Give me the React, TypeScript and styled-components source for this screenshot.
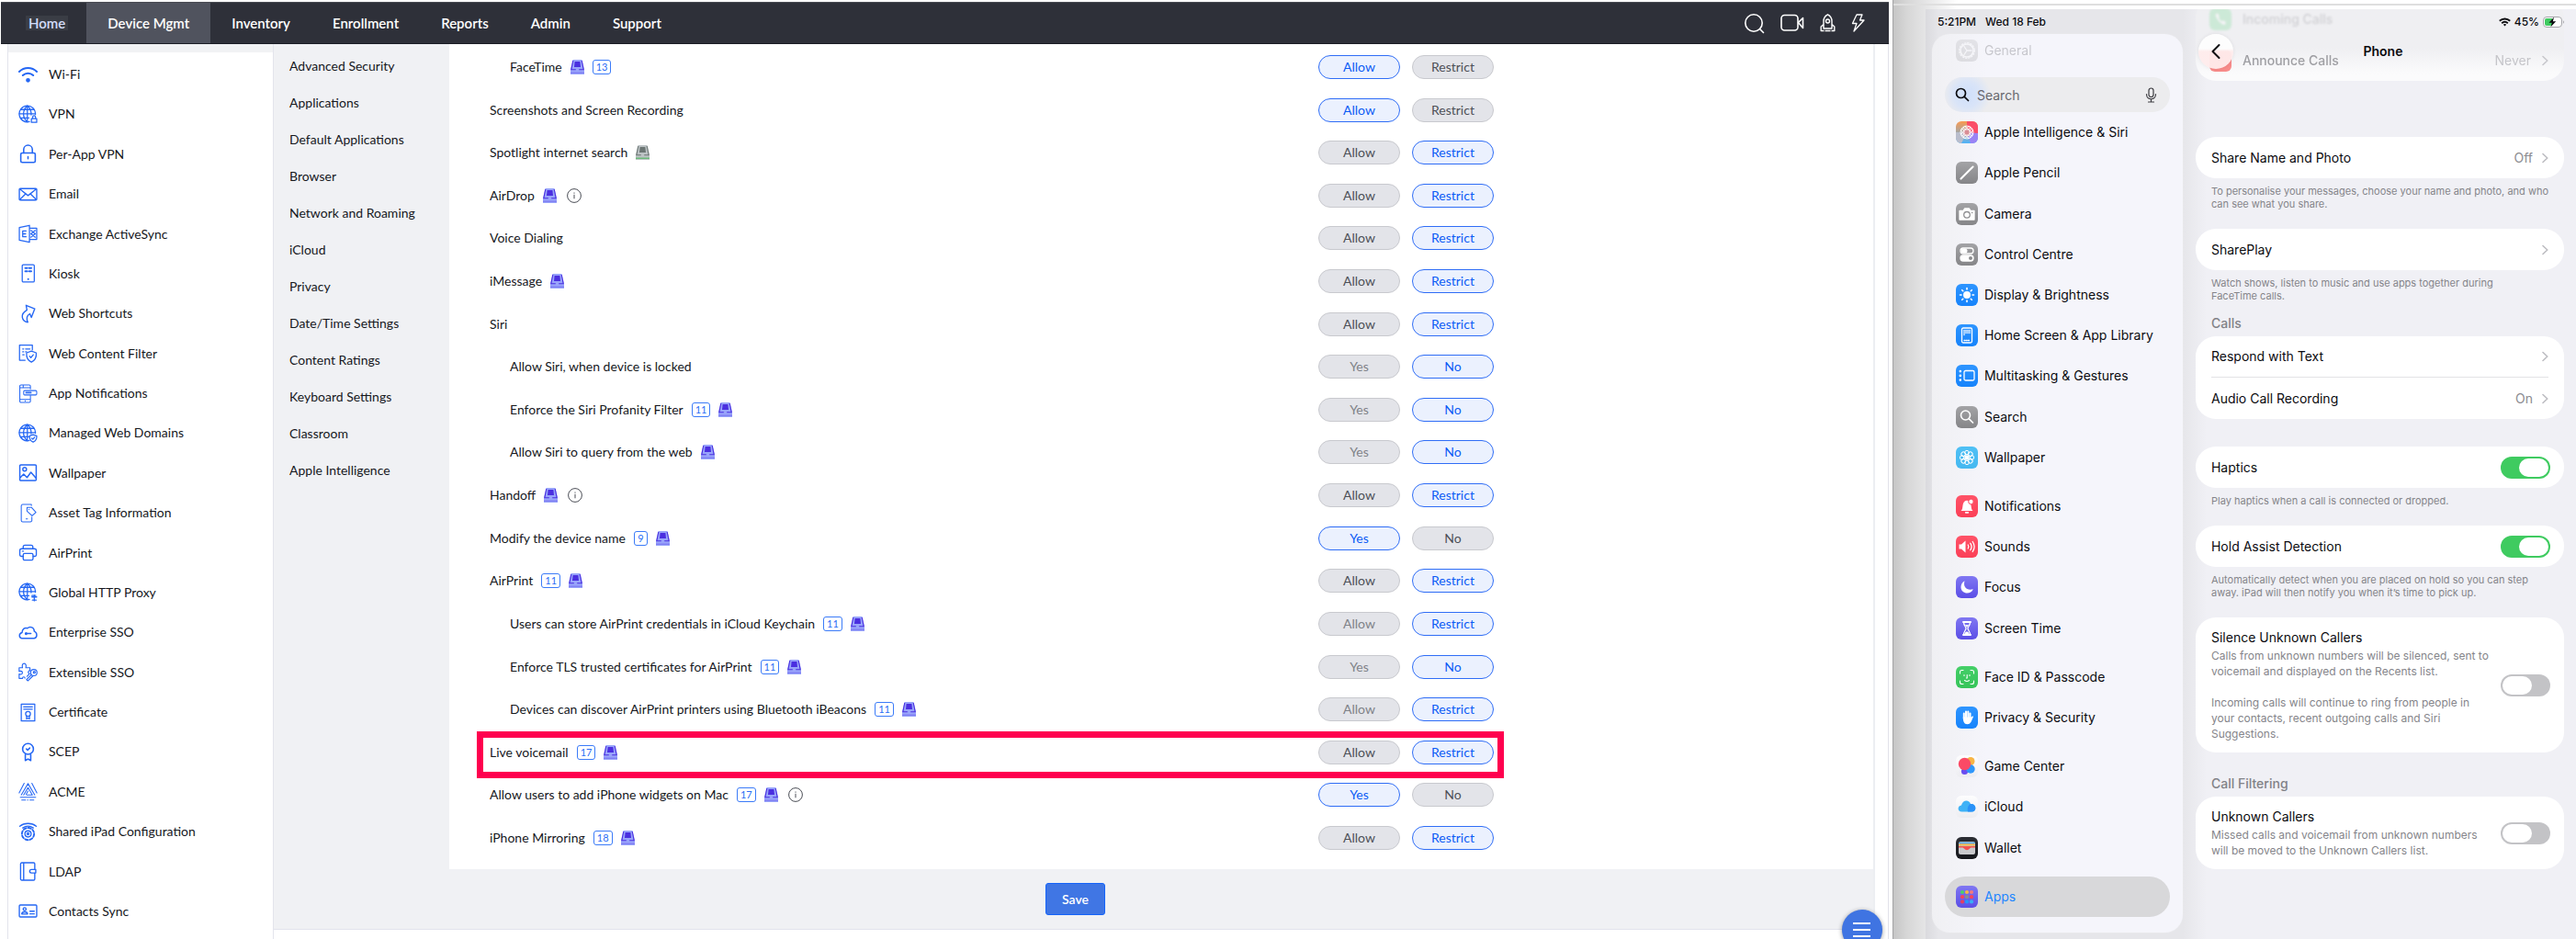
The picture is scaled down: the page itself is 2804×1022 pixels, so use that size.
import React from "react";
import styled, { createGlobalStyle } from "styled-components";

const GlobalStyle = createGlobalStyle`
  *, *::before, *::after { box-sizing: border-box; }
  body { margin: 0; background: #fff; }
  ul { list-style: none; margin: 0; padding: 0; }
  button, input { font-family: inherit; }
  h1, h2, p { margin: 0; font-weight: inherit; }
  a { color: inherit; text-decoration: none; }
`;

/* ---------- page ---------- */

const Page = styled.div`
  display: grid;
  grid-template-columns: 2060fr 744fr;
  min-height: 100vh;
`;

/* ---------- admin console ---------- */

const Console = styled.div`
  position: relative;
  display: flex;
  flex-direction: column;
  overflow: hidden;
  padding: 2px 4px 0 1px;
  background: #fff;
  color: #16181d;
  font: 14px/20px Lato, "Open Sans", sans-serif;
`;

const TopBar = styled.header`
  display: flex;
  justify-content: space-between;
  height: 46px;
  padding: 0 26px 0 7px;
  background: #2e3039;
  border-top: 1px solid #4a4c54;
  border-bottom: 1px solid #1a1c24;
  color: #fff;
`;

const TopNav = styled.nav`
  display: flex;
`;

const TopLink = styled.a<{ $active?: boolean; $focused?: boolean }>`
  display: flex;
  align-items: center;
  padding: 0 23px;
  font-size: 15px;
  font-weight: 600;
  background: ${(p) => (p.$active ? "#50535e" : "transparent")};
  span {
    background: ${(p) => (p.$focused ? "#3a3d45" : "transparent")};
    box-shadow: ${(p) => (p.$focused ? "0 0 0 3px #3a3d45" : "none")};
    color: ${(p) => (p.$focused ? "#d3ddfb" : "#fff")};
    line-height: 10px;
  }
`;

const TopTools = styled.div`
  display: flex;
  align-items: center;
  gap: 17px;
`;

const ToolButton = styled.button`
  display: flex;
  padding: 0;
  border: 0;
  background: none;
  color: #fff;
`;

const Body = styled.div`
  display: flex;
  flex: 1;
  padding: 0 14px 0 7px;
  border-right: 1px solid #e2e2ea;
`;

const SideNav = styled.nav`
  display: flex;
  flex-direction: column;
  width: 290px;
  border: 1px solid #e3e4ec;
  border-width: 0 1px;
  &::before {
    content: "";
    height: 9px;
    background: #f1f2f4;
  }
`;

const SideList = styled.ul`
  display: flex;
  flex: 1;
  flex-direction: column;
  justify-content: space-between;
  padding: 13px 11px 19px;
`;

const SideLink = styled.a`
  display: flex;
  align-items: center;
  gap: 12px;
  height: 22px;
  svg {
    width: 21px;
    height: 21px;
    flex: none;
  }
`;

const Workspace = styled.div`
  display: flex;
  flex: 1;
  flex-direction: column;
  border-right: 2px solid #eceef2;
`;

const Columns = styled.div`
  display: flex;
  flex: 1;
`;

const SubNav = styled.nav`
  width: 191px;
  padding: 4px 17px;
  background: #f0f1f4;
`;

const SubLink = styled.a`
  display: block;
  line-height: 40px;
  white-space: nowrap;
`;

const Settings = styled.ul`
  display: flex;
  flex: 1;
  flex-direction: column;
  justify-content: space-between;
  padding: 12px 413px 21px 44px;
`;

const Setting = styled.li<{ $nested?: boolean }>`
  position: relative;
  display: flex;
  align-items: center;
  justify-content: space-between;
  height: 26px;
  padding-left: ${(p) => (p.$nested ? 22 : 0)}px;
`;

const Highlight = styled.span`
  position: absolute;
  inset: -10px -11px -15px -14px;
  border: 7px solid #ff004f;
  pointer-events: none;
`;

const SettingLabel = styled.span`
  display: flex;
  align-items: center;
  gap: 9px;
  white-space: nowrap;
`;

const Version = styled.span`
  min-width: 15px;
  padding: 0 3px;
  border: 1px solid #3b7bf8;
  border-radius: 3px;
  color: #2b6ef5;
  font-size: 11px;
  line-height: 14px;
  text-align: center;
`;

const Choices = styled.span`
  display: flex;
  gap: 13px;
`;

const Choice = styled.button<{ $on: boolean; $dim?: boolean }>`
  width: 89px;
  height: 26px;
  padding: 0;
  border: 1px solid ${(p) => (p.$on ? "#2f6df6" : "#c8c9ce")};
  border-radius: 13px;
  background: ${(p) => (p.$on ? "#ebf1fe" : "#e3e4e9")};
  color: ${(p) => (p.$on ? "#0b5cf5" : p.$dim ? "#7f8288" : "#4d5057")};
  font-size: 14px;
  line-height: 20px;
`;

const Footer = styled.footer`
  display: flex;
  justify-content: center;
  height: 66px;
  padding: 15px 0 0 4px;
  background: #f0f1f4;
  border-bottom: 1px solid #e2e3ec;
`;

const Tail = styled.div`
  height: 10px;
`;

const SaveButton = styled.button`
  width: 65px;
  height: 35px;
  border: 1px solid #1464fa;
  border-radius: 3px;
  background: #4076e4;
  color: #fff;
  font-size: 14px;
  font-weight: 600;
`;

const Fab = styled.button`
  position: absolute;
  right: 11px;
  bottom: -12px;
  display: flex;
  flex-direction: column;
  align-items: center;
  justify-content: center;
  gap: 5px;
  width: 44px;
  height: 44px;
  padding: 0;
  border: 0;
  border-radius: 50%;
  background: #3f74e2;
  box-shadow: 0 1px 5px rgba(0, 0, 0, 0.4);
  i {
    width: 19px;
    height: 2px;
    background: #fff;
  }
`;

/* ---------- tablet ---------- */

const TabletFrame = styled.div`
  position: relative;
  display: flex;
  padding: 10px 0 0 35px;
  background: linear-gradient(90deg, #c6c6c6 0, #d6d6d6 14px, #e4e4e5 34px, #fff 70px);
  border-left: 1px solid #a3a3a5;
  &::before {
    content: "";
    position: absolute;
    inset: 4px 0 auto 0;
    height: 2px;
    background: #dfdfdf;
  }
`;

const Tablet = styled.div`
  position: relative;
  display: flex;
  flex: 1;
  overflow: hidden;
  padding-left: 7px;
  background: linear-gradient(90deg, #dadade 0, #e6e6ea 14px, #e6e6ea 280px, #f0f0f5 306px);
  color: #0b0b0f;
  font: 14px/20px Inter, Roboto, sans-serif;
`;

const Clock = styled.div`
  position: absolute;
  top: 4px;
  left: 13px;
  display: flex;
  gap: 10px;
  font-size: 12px;
  font-weight: 500;
`;

const Battery = styled.div`
  position: absolute;
  top: 4px;
  right: 12px;
  display: flex;
  align-items: center;
  gap: 4px;
  font-size: 12px;
  font-weight: 500;
`;

const Panel = styled.aside`
  display: flex;
  flex-direction: column;
  width: 273px;
  margin: 27px 8px 7px 0;
  padding: 6px 14px 17px;
  border-radius: 20px;
  background: linear-gradient(90deg, #f0f0f3, #f5f5fb 60px);
  box-shadow: 0 0 1px rgba(255, 255, 255, 0.9);
`;

const PanelRow = styled.a<{ $selected?: boolean; $faded?: boolean }>`
  display: flex;
  flex: ${(p) => (p.$faded ? "none" : 1)};
  align-items: center;
  gap: 7px;
  padding: 0 12px;
  border-radius: 22px;
  background: ${(p) => (p.$selected ? "#d8d8da" : "transparent")};
  color: ${(p) => (p.$selected ? "#1e86ff" : "inherit")};
  opacity: ${(p) => (p.$faded ? 0.2 : 1)};
  white-space: nowrap;
  svg {
    width: 24px;
    height: 24px;
    flex: none;
  }
`;

const SearchBox = styled.label`
  display: flex;
  align-items: center;
  gap: 8px;
  height: 38px;
  margin-top: 17px;
  padding: 0 14px 0 11px;
  border-radius: 19px;
  background: radial-gradient(circle at 24px 19px, #cfdffb 0, #d9e4f8 14px, rgba(217, 228, 248, 0) 26px), #ececee;
  input {
    flex: 1;
    min-width: 0;
    padding: 0;
    border: 0;
    background: none;
    outline: 0;
    font-size: 14px;
    color: #0b0b0f;
  }
  input::placeholder {
    color: #67676d;
    opacity: 1;
  }
  svg {
    flex: none;
  }
`;

const PanelGroups = styled.div`
  display: flex;
  flex: 1;
  flex-direction: column;
  gap: 9px;
`;

const PanelGroup = styled.div<{ $rows: number }>`
  display: flex;
  flex: ${(p) => p.$rows} 0 0px;
  flex-direction: column;
`;

const Detail = styled.section`
  position: relative;
  flex: 1;
  padding: 0 13px 0 6px;
`;

const DetailHeader = styled.header`
  position: absolute;
  inset: 27px 0 auto 0;
  height: 38px;
  h1 {
    font-size: 14px;
    font-weight: 600;
    line-height: 38px;
    text-align: center;
  }
`;

const BackButton = styled.button`
  position: absolute;
  left: 9px;
  display: flex;
  align-items: center;
  justify-content: center;
  width: 38px;
  height: 38px;
  padding: 0;
  border: 0;
  border-radius: 50%;
  background: linear-gradient(#fdfdfd 42%, rgba(255, 236, 236, 0.95) 50%);
  box-shadow: 0 0 4px rgba(0, 0, 0, 0.08);
  color: #0b0b0f;
`;

const Scrolled = styled.div`
  height: 90px;
  margin: -12px 0 61px;
  border-radius: 22px;
  background: linear-gradient(#efeff2 60%, #fbfbfc 92%);
`;

const ScrolledRow = styled.div<{ $blur: number; $strength: number }>`
  display: flex;
  align-items: center;
  gap: 12px;
  height: 45px;
  padding: 0 17px 0 15px;
  color: #8a8a8f;
  filter: blur(${(p) => p.$blur}px);
  opacity: ${(p) => p.$strength};
  span {
    flex: 1;
    font-weight: 500;
  }
`;

const Faint = styled.em`
  color: #b9b9be;
  font-style: normal;
`;

const Card = styled.div`
  padding: 0 17px;
  border-radius: 22px;
  background: #fff;
  p + & {
    margin-top: 7px;
  }
`;

const CardRow = styled.div<{ $line?: boolean }>`
  display: flex;
  align-items: center;
  gap: 10px;
  height: 45px;
  border-bottom: ${(p) => (p.$line ? "1px solid #e2e2e5" : "0")};
  span,
  label {
    flex: 1;
  }
  em {
    color: #8b8b90;
    font-style: normal;
  }
`;

const Note = styled.p`
  padding: 7px 17px 13px;
  color: #85858a;
  font-size: 11px;
  line-height: 14px;
  white-space: pre;
`;

const GroupTitle = styled.h2`
  margin: 0 17px 4px;
  color: #828287;
  font-size: 14px;
  font-weight: 500;
  div + & {
    margin-top: 24px;
  }
`;

const LongRow = styled.div`
  display: flex;
  align-items: center;
  justify-content: space-between;
  padding: 12px 0;
  label {
    display: block;
  }
  p {
    margin-top: 1px;
    color: #85858a;
    font-size: 12px;
    line-height: 17px;
    white-space: pre-line;
  }
`;

const Toggle = styled.input`
  appearance: none;
  flex: none;
  width: 54px;
  height: 24px;
  margin: 0 -2px 0 0;
  padding: 2px;
  border-radius: 12px;
  background: #c3c3c6;
  &::before {
    content: "";
    display: block;
    width: 32px;
    height: 20px;
    border-radius: 10px;
    background: #fff;
  }
  &:checked {
    background: #3fcb60;
  }
  &:checked::before {
    margin-left: auto;
  }
`;

const Spacer = styled.div`
  height: 30px;
`;

/* ---------- drawings ---------- */

const Line = ({ children, w = 1.2 }: { children: React.ReactNode; w?: number }) => (
  <svg viewBox="0 0 20 20" fill="none" stroke="#2567f4" strokeWidth={w} strokeLinecap="round" strokeLinejoin="round" aria-hidden>
    {children}
  </svg>
);

const Globe = () => (
  <>
    <path d="M11.5 17.6A8.4 8.4 0 1 1 17.7 10" />
    <path d="M9.3 1C4 6 4 13 9.3 17.8M9.3 1c3.4 3 4.2 6 4 9.5M9.3 1v16.8M1 9.4h16.5M2.5 5h13.7M2.5 13.6H11" />
  </>
);

const sideIcons: Record<string, React.ReactNode> = {
  "Wi-Fi": (
    <Line w={1.9}>
      <path d="M.9 6.6C6 1.6 14 1.6 19.1 6.6M4.6 10.5c3-2.9 7.8-2.9 10.8 0" />
      <circle cx="10" cy="15.5" r="1.3" fill="#2567f4" />
    </Line>
  ),
  VPN: (
    <Line>
      <Globe />
      <path d="M13.5 14.3h5.5v4h-5.5zM14.8 14.3v-1.5a1.5 1.5 0 0 1 3 0v1.5" />
    </Line>
  ),
  "Per-App VPN": (
    <Line w={1.5}>
      <rect x="2.5" y="9" width="15" height="9.8" rx="1.5" />
      <path d="M5.5 9V5.5a4.5 4.5 0 0 1 9 0V9M10 13v2" />
    </Line>
  ),
  Email: (
    <Line w={1.3}>
      <rect x="1" y="4" width="18" height="12" rx="1" />
      <path d="M1.5 4.5 10 11.300l8.500-6.800M1.500 15.500l6-6M18.500 15.500l-6-6" />
    </Line>
  ),
  "Exchange ActiveSync": (
    <Line>
      <path d="M11.5 1.2v17.6L1 16.500v-13zM4.500 7h3.500M4.500 10h3M4.500 13h3.500M4.500 7v6M11.500 4.200H19v11.600h-7.500M13 6.500l4.500 3.500-4.500 3.500M17.500 6.500 13 10l4.500 3.500" />
    </Line>
  ),
  Kiosk: (
    <Line>
      <rect x="4" y="1" width="12.5" height="18" rx="1.2" />
      <path d="M7.2 4.500h2M11.300 4.500h2M7.200 7.800h2M11.300 7.800h2" strokeWidth="2" />
      <path d="M10.2 15.800v.3" strokeWidth="1.8" />
    </Line>
  ),
  "Web Shortcuts": (
    <Line w={1.3}>
      <path d="M8 1.200 17 4.800l-3.500 9-1.600-3.800C9 11.500 8 14.500 9.800 18.800 3.500 17.500 1.200 10.500 8.900 6z" />
    </Line>
  ),
  "Web Content Filter": (
    <Line>
      <path d="M7 17.200H1.200V1.500h13.300v5M4.500 5.500h1M7.500 5.500h4.500M4.500 8.500h1M7.500 8.500h1M4.500 11.500h1.500" />
      <path d="M13.500 7.800 18.500 9.500c.4 4.500-1.500 8-5 9.600-3.500-1.600-5.400-5.100-5-9.600zM11.500 13l1.500 1.500 2.500-3" />
    </Line>
  ),
  "App Notifications": (
    <Line w={1}>
      <path d="M12.500 5V2.200A1.200 1.200 0 0 0 11.300 1H2.700a1.200 1.200 0 0 0-1.200 1.200v15.600A1.200 1.200 0 0 0 2.700 19h8.600a1.200 1.200 0 0 0 1.200-1.200V12M1.500 3.800h11M1.500 16h11M5 1v2.500M7 17.500h.2" />
      <rect x="5.5" y="6.8" width="13.5" height="4.5" rx="1" />
      <path d="M8 9h5" strokeWidth="1.6" />
    </Line>
  ),
  "Managed Web Domains": (
    <Line>
      <Globe />
      <path d="M15.300 11.500 19 12.700c.2 3-1 5.200-3.700 6.500-2.700-1.300-3.900-3.500-3.700-6.500zM13.900 15.200l1.100 1.100 1.800-2" />
    </Line>
  ),
  Wallpaper: (
    <Line w={1.4}>
      <rect x="1.5" y="1.8" width="17" height="16.4" rx="1" />
      <circle cx="6.5" cy="6.5" r="1.9" />
      <path d="m2 15 3.500-3.500 3.500 3.500 4-5.500 5.200 6" />
    </Line>
  ),
  "Asset Tag Information": (
    <Line w={1}>
      <path d="M13.500 2V1H4.500A1.500 1.500 0 0 0 3 2.500v15A1.500 1.500 0 0 0 4.500 19h8a1.500 1.500 0 0 0 1.500-1.500V14M8 16h1.500" />
      <path d="M9 4h4.500l4.700 5.200-4 3.600L9 8zM11 6v.3" />
    </Line>
  ),
  AirPrint: (
    <Line w={1.3}>
      <path d="M5 6V4.200C5 3 5.500 2.300 6.800 2.300h6.400c1.300 0 1.800.7 1.800 1.900V6" />
      <path d="M5 13.800H3.200A1.700 1.700 0 0 1 1.500 12V7.800C1.500 6.600 2.300 6 3.400 6h13.200c1.100 0 2 .6 2 1.800V12a1.700 1.700 0 0 1-1.700 1.800H15.500M4.200 8.500h1" />
      <rect x="5" y="10.8" width="10.2" height="7" rx="1.5" />
    </Line>
  ),
  "Global HTTP Proxy": (
    <Line>
      <Globe />
      <path d="M14 13.500h4M14 15h5M16.500 13v6M14.500 18.300h4" />
    </Line>
  ),
  "Enterprise SSO": (
    <Line w={1.4}>
      <path d="M3.500 16c-3-.5-3.300-5 .3-6 .3-4 3-5.500 5.500-4.500 3-2.600 7.200-.8 7.200 3.200 3.200 1 3.500 6.500 0 7.300z" />
      <circle cx="8" cy="11" r=".8" />
      <path d="M9 11h4" />
    </Line>
  ),
  "Extensible SSO": (
    <Line w={1.1}>
      <path d="M.8 5.500h3.500C3.500 2.500 4.500 1 6 1s2.500 1.500 1.700 4.500H12v3c-2 0-2.500 2.500-.5 3.300L9 14.500M.8 5.500v3.700C3 8.500 4.200 9.300 4.200 10.600c0 1.500-1.500 2.200-3.400 1.400v4.500h3.500c0-2 2.500-2 2.500-.2" />
      <circle cx="16" cy="10.5" r="3.3" />
      <circle cx="16.5" cy="10.2" r="1" />
      <path d="m13.500 12.800-5 5 1.500 1.200 5.200-5.200" />
    </Line>
  ),
  Certificate: (
    <Line w={1.2}>
      <path d="M3 1.200h14v17.600H3zM5.500 4.200h9M5.500 6.500h9" />
      <circle cx="10" cy="11.5" r="2.5" />
      <path d="M8.500 13.500v3.200l1.500-.8 1.500.8v-3.200" />
    </Line>
  ),
  SCEP: (
    <Line w={1.5}>
      <circle cx="10" cy="6.8" r="5.6" />
      <path d="m8.300 6.800 1.300 1.200 2.200-2.200M7.200 12.500v6.300L10 17.200l2.800 1.600v-6.300" />
    </Line>
  ),
  ACME: (
    <Line w={1}>
      <path d="M10 1.800 3 13.500M10 1.800l7 11.700M2 16h16M10 6l-4.500 7.500M10 6l4.500 7.500H9M10 9.500 8 13M6 1.500l-5.200 10M14 1.500l5.200 10M3.500 18.800h4M9.500 18.800h.5M12 18.800h4" />
    </Line>
  ),
  "Shared iPad Configuration": (
    <Line w={1.3}>
      <path d="M1.500 4C6 .3 14 .3 18.500 4M4.500 5.800c3.300-2.300 7.700-2.300 11 0" />
      <circle cx="10" cy="12" r="1" />
      <circle cx="10" cy="12" r="3.2" />
      <circle cx="10" cy="12" r="6.3" strokeDasharray="3 1.95" strokeWidth="1.8" />
    </Line>
  ),
  LDAP: (
    <Line w={1.3}>
      <path d="M17 7.500V2.200A1.200 1.200 0 0 0 15.800 1H3.500a1.200 1.200 0 0 0-1.200 1.200v15.600A1.200 1.200 0 0 0 3.500 19h12.300a1.200 1.200 0 0 0 1.200-1.200V12M5.500 1v18M18 8h-4.500a1.700 1.700 0 0 0 0 3.500H18z" />
    </Line>
  ),
  "Contacts Sync": (
    <Line w={1.3}>
      <rect x="1" y="3.8" width="18" height="12.4" rx="1" />
      <circle cx="6.5" cy="8" r="1.5" />
      <path d="M3.500 13.200c0-3 6-3 6 0zM12 10.200h4.500M12 13h4.500" />
    </Line>
  ),
};

const DeviceIcon = ({ muted }: { muted?: boolean }) => {
  const dark = muted ? "#6c7674" : "#4a2fe0";
  return (
    <svg width="15" height="16" viewBox="0 0 15 16" aria-hidden>
      <path d="M2.500 0h10L15 10.500V16H0v-5.500z" fill={muted ? "#bcc2c4" : "#98a4fa"} />
      <path d="M2.800 1 .8 10.800h5M12.200 1l2 9.800h-5" fill="none" stroke={dark} strokeWidth="1.1" />
      <path d="M4.600 2h5.800l.6 6h-7z" fill={dark} />
      <path d="M0 14.200h15" stroke={muted ? "#58b868" : "#7c78f2"} strokeWidth="1.2" />
    </svg>
  );
};

const InfoIcon = () => (
  <svg width="18" height="16" viewBox="0 0 18 16" fill="none" stroke="#4a4d55" strokeWidth="1" aria-hidden>
    <circle cx="10" cy="8" r="7.4" />
    <path d="M10 6.800v4.500M10 4.500v1.200" />
  </svg>
);

const Chevron = () => (
  <svg width="7" height="12" viewBox="0 0 7 12" fill="none" stroke="#bdbdc2" strokeWidth="1.6" strokeLinecap="round" strokeLinejoin="round" aria-hidden>
    <path d="m1 1.500 4.800 4.500L1 10.500" />
  </svg>
);

const Tile = ({ top, bottom, children }: { top: string; bottom?: string; children?: React.ReactNode }) => {
  const id = React.useId();
  return (
    <svg viewBox="0 0 24 24" fill="none" stroke="#fff" strokeWidth="1.3" strokeLinecap="round" strokeLinejoin="round" aria-hidden>
      <linearGradient id={id} x1="0" y1="0" x2="0" y2="1">
        <stop offset="0" stopColor={top} />
        <stop offset="1" stopColor={bottom ?? top} />
      </linearGradient>
      <rect width="24" height="24" rx="6" fill={`url(#${id})`} stroke="none" />
      {children}
    </svg>
  );
};

const turns = [0, 45, 90, 135, 180, 225, 270, 315];
const grey = { top: "#a3a3a6", bottom: "#858588" };
const blue = { top: "#2e95ff", bottom: "#1683fb" };
const red = { top: "#ff5368", bottom: "#fb3f57" };
const indigo = { top: "#8077f2", bottom: "#5b4ee6" };

const tiles: Record<string, React.ReactNode> = {
  General: (
    <Tile {...grey}>
      <circle cx="12" cy="12" r="7" strokeWidth="1.6" />
      <circle cx="12" cy="12" r="8.3" strokeDasharray="1.3 2" strokeWidth="1.3" />
      <path d="M9 7.500 12 12h5M12 12l-3 4.500" />
    </Tile>
  ),
  "Apple Intelligence & Siri": (
    <Tile top="#fb9a50" bottom="#4fb4fb">
      <path d="M12 0h6a6 6 0 0 1 6 6v8L12 12z" fill="#fb4d68" stroke="none" />
      <path d="M0 12v6a6 6 0 0 0 6 6l6-12z" fill="#b9bdcc" stroke="none" />
      <path d="m24 13-12-1 4 12h2a6 6 0 0 0 6-6z" fill="#9a83f5" stroke="none" />
      <circle cx="12" cy="12" r="4.5" fill="#d98d95" stroke="none" />
      {turns.map((a) => (
        <ellipse key={a} cx="12" cy="7" rx="3.6" ry="2" transform={`rotate(${a} 12 12)`} strokeWidth=".9" />
      ))}
    </Tile>
  ),
  "Apple Pencil": (
    <Tile {...grey}>
      <path d="M5.500 18.500 17.500 6.500" strokeWidth="2.2" />
      <path d="M18.500 5.500h.1" strokeWidth="2" />
    </Tile>
  ),
  Camera: (
    <Tile {...grey}>
      <path d="M4 8.500h4L9.500 6h5L16 8.500h4v9.500H4z" fill="#fff" />
      <circle cx="12" cy="12.8" r="3.3" stroke="#909093" />
      <path d="M17.500 10.500h.3" stroke="#909093" />
    </Tile>
  ),
  "Control Centre": (
    <Tile {...grey}>
      <rect x="5" y="5" width="14" height="6" rx="3" />
      <rect x="5.5" y="5.5" width="7" height="5" rx="2.5" fill="#fff" stroke="none" />
      <rect x="5" y="13" width="14" height="6" rx="3" fill="#fff" />
      <circle cx="16" cy="16" r="2" fill="#8c8c8f" stroke="none" />
    </Tile>
  ),
  "Display & Brightness": (
    <Tile {...blue}>
      <circle cx="12" cy="12" r="4" fill="#fff" stroke="none" />
      {turns.map((a) => (
        <path key={a} d="M12 4.500v1.500" strokeWidth="1.6" transform={`rotate(${a} 12 12)`} />
      ))}
    </Tile>
  ),
  "Home Screen & App Library": (
    <Tile {...blue}>
      <rect x="6.5" y="4" width="11" height="16" rx="1.5" />
      <path d="M9 6.500v5M11 6.500v3M13 6.500v3M15 6.500v3M9 17.500h6" strokeDasharray="1 1.2" />
    </Tile>
  ),
  "Multitasking & Gestures": (
    <Tile {...blue}>
      <rect x="9" y="6.5" width="11" height="10.5" rx="1.5" />
      <path d="M4.800 7v.1M4.800 11.800v.1M4.800 16.500v.1" strokeWidth="2.6" />
    </Tile>
  ),
  Search: (
    <Tile {...grey}>
      <circle cx="10.5" cy="10" r="5" strokeWidth="1.6" />
      <path d="m14.300 13.800 4.200 4.200" strokeWidth="1.7" />
    </Tile>
  ),
  Wallpaper: (
    <Tile top="#4fc0f5" bottom="#45b8f0">
      {turns.map((a) => (
        <circle key={a} cx="12" cy="6.6" r="2.3" transform={`rotate(${a} 12 12)`} strokeWidth="1" />
      ))}
      {turns.map((a) => (
        <path key={a} d="M12 10V8.500" transform={`rotate(${a} 12 12)`} strokeWidth="1" />
      ))}
      <circle cx="12" cy="12" r="1.6" fill="#fff" />
    </Tile>
  ),
  Notifications: (
    <Tile {...red}>
      <path d="M5.500 17c2-1.500 1.500-4 2.200-7C8.500 7 10 5.800 12 5.800s3.500 1.200 4.300 4.200c.7 3 .2 5.500 2.200 7z" fill="#fff" stroke="none" />
      <path d="M10.800 18.800h2.400" strokeWidth="1.8" />
      <circle cx="16.5" cy="7" r="2.8" fill="#fff" stroke="#fd4a60" strokeWidth="1" />
    </Tile>
  ),
  Sounds: (
    <Tile {...red}>
      <path d="M3.500 9.500H6l4.500-4v13L6 14.500H3.500z" fill="#fff" stroke="none" />
      <path d="M13.200 10c.8 1.200.8 2.800 0 4M15.800 8.300c1.600 2.300 1.600 5.100 0 7.400M18.200 6.500c2.400 3.500 2.400 7.500 0 11" />
    </Tile>
  ),
  Focus: (
    <Tile {...indigo}>
      <path d="M9.500 5.200C7.500 12 12 16 18.800 14.200 16 21 5.500 19.500 5.500 12c0-3 1.500-5.600 4-6.800z" fill="#fff" stroke="none" />
    </Tile>
  ),
  "Screen Time": (
    <Tile {...indigo}>
      <path d="M8 5h8M8 19h8" strokeWidth="2" />
      <path d="M8.500 5c0 4 2.500 5 2.500 7s-2.500 3-2.500 7h7c0-4-2.500-5-2.500-7s2.500-3 2.500-7z" />
      <path d="M9.500 18c.5-2 1.500-2.500 2.500-2.500s2 .5 2.500 2.500zM10 8h4l-2 3z" fill="#fff" stroke="none" />
    </Tile>
  ),
  "Face ID & Passcode": (
    <Tile top="#45cf68" bottom="#37c45a">
      <path
        d="M4.500 8V6.500a2 2 0 0 1 2-2H8M16 4.500h1.500a2 2 0 0 1 2 2V8M4.500 16v1.500a2 2 0 0 0 2 2H8M16 19.500h1.500a2 2 0 0 0 2-2V16M9 9.500v1M15 9.500v1M12.200 9.500v3.500h-.8M9.500 15.500c1.500 1.200 3.500 1.200 5 0"
        strokeWidth="1.1"
      />
    </Tile>
  ),
  "Privacy & Security": (
    <Tile {...blue}>
      <path d="M8.800 13V7.500M11 11.500V5.500M13.300 11.500V5.500M15.500 12V7.500" strokeWidth="2" />
      <path d="M7.800 11.500h8.700l2-1.300c.8.500.3 1.600-.5 3-1 2.500-2 6-5.500 6-3.700 0-4.700-3-4.700-7.700z" fill="#fff" stroke="none" />
    </Tile>
  ),
  "Game Center": (
    <Tile top="#fdfdfe" bottom="#ededf1">
      <circle cx="16" cy="6.5" r="4.5" fill="#f8b545" stroke="none" />
      <circle cx="9.5" cy="17.5" r="3.6" fill="#6a4df0" stroke="none" />
      <circle cx="16" cy="15" r="4.7" fill="#2e97fb" stroke="none" />
      <circle cx="9.5" cy="9.5" r="6.7" fill="#fb4a66" stroke="none" />
    </Tile>
  ),
  iCloud: (
    <Tile top="#fdfdfe" bottom="#ededf1">
      <path d="M6.500 17.500c-5 0-5.200-6.500-.5-7C7 4.500 14.500 3.500 16 9c6.500-.5 7.500 8.500 1 8.500z" fill="#3fb2f6" stroke="none" />
      <path d="M13 17.500c-1-4 1-8.500 3-8.500 6.500-.5 7.500 8.500 1 8.500z" fill="#2a92f8" stroke="none" />
    </Tile>
  ),
  Wallet: (
    <Tile top="#2b2d33" bottom="#15161b">
      <rect x="3" y="5" width="18" height="14" rx="2" fill="#c9c9cc" stroke="none" />
      <path d="M4 6.500h16" stroke="#4aa3e8" strokeWidth="1.6" />
      <path d="M4 8.500h16" stroke="#f2b84a" strokeWidth="1.8" />
      <path d="M3 10h18v1.600h-4.500c-1 0-2 2.600-4.500 2.600s-3.500-2.600-4.500-2.600H3z" fill="#f4524f" stroke="none" />
    </Tile>
  ),
  Apps: (
    <Tile {...indigo}>
      {["#4bd06a", "#f8b545", "#f2787c", "#fb4358", "#8b8b92", "#fb4358", "#e33f62", "#2496fb", "#39aef5"].map((c, i) => (
        <circle key={i} cx={7 + (i % 3) * 5} cy={7 + Math.floor(i / 3) * 5.2} r="2.1" fill={c} stroke="none" />
      ))}
    </Tile>
  ),
};

const PhoneTile = () => (
  <svg width="24" height="24" viewBox="0 0 24 24" aria-hidden>
    <rect width="24" height="24" rx="6" fill="#7fdc9a" />
    <path d="M7 6c-2 3 6 13 10 12l1-3-3-2-1.500 1.200c-1.500-.7-3.200-3-3.500-4.200L11 9 9 5.500z" fill="#fff" />
  </svg>
);

const AlertTile = () => (
  <svg width="24" height="24" viewBox="0 0 24 24" aria-hidden>
    <rect width="24" height="24" rx="6" fill="#f8706f" />
  </svg>
);

/* ---------- data ---------- */

const topLinks = ["Home", "Device Mgmt", "Inventory", "Enrollment", "Reports", "Admin", "Support"];

const subLinks = [
  "Advanced Security",
  "Applications",
  "Default Applications",
  "Browser",
  "Network and Roaming",
  "iCloud",
  "Privacy",
  "Date/Time Settings",
  "Content Ratings",
  "Keyboard Settings",
  "Classroom",
  "Apple Intelligence",
];

type Mark = "device" | "muted" | "info" | number;
type Row = { label: string; marks?: Mark[]; nested?: boolean; yesNo?: boolean; on?: boolean; dim?: boolean; highlight?: boolean };

const rows: Row[] = [
  { label: "FaceTime", marks: ["device", 13], nested: true, on: true },
  { label: "Screenshots and Screen Recording", on: true },
  { label: "Spotlight internet search", marks: ["muted"] },
  { label: "AirDrop", marks: ["device", "info"] },
  { label: "Voice Dialing" },
  { label: "iMessage", marks: ["device"] },
  { label: "Siri" },
  { label: "Allow Siri, when device is locked", nested: true, yesNo: true, dim: true },
  { label: "Enforce the Siri Profanity Filter", marks: [11, "device"], nested: true, yesNo: true, dim: true },
  { label: "Allow Siri to query from the web", marks: ["device"], nested: true, yesNo: true, dim: true },
  { label: "Handoff", marks: ["device", "info"] },
  { label: "Modify the device name", marks: [9, "device"], yesNo: true, on: true },
  { label: "AirPrint", marks: [11, "device"] },
  { label: "Users can store AirPrint credentials in iCloud Keychain", marks: [11, "device"], nested: true, dim: true },
  { label: "Enforce TLS trusted certificates for AirPrint", marks: [11, "device"], nested: true, yesNo: true, dim: true },
  { label: "Devices can discover AirPrint printers using Bluetooth iBeacons", marks: [11, "device"], nested: true, dim: true },
  { label: "Live voicemail", marks: [17, "device"], highlight: true },
  { label: "Allow users to add iPhone widgets on Mac", marks: [17, "device", "info"], yesNo: true, on: true },
  { label: "iPhone Mirroring", marks: [18, "device"] },
];

const panelGroups = [
  [
    "Apple Intelligence & Siri",
    "Apple Pencil",
    "Camera",
    "Control Centre",
    "Display & Brightness",
    "Home Screen & App Library",
    "Multitasking & Gestures",
    "Search",
    "Wallpaper",
  ],
  ["Notifications", "Sounds", "Focus", "Screen Time"],
  ["Face ID & Passcode", "Privacy & Security"],
  ["Game Center", "iCloud", "Wallet"],
  ["Apps"],
];

/* ---------- parts ---------- */

const MarkView = ({ mark }: { mark: Mark }) => {
  if (typeof mark === "number") return <Version>{mark}</Version>;
  if (mark === "info") return <InfoIcon />;
  return <DeviceIcon muted={mark === "muted"} />;
};

const SettingRow = ({ row }: { row: Row }) => (
  <Setting $nested={row.nested}>
    {row.highlight && <Highlight />}
    <SettingLabel>
      {row.label}
      {row.marks?.map((m, i) => <MarkView key={i} mark={m} />)}
    </SettingLabel>
    <Choices role="group" aria-label={row.label}>
      <Choice $on={!!row.on} $dim={row.dim} aria-pressed={!!row.on}>
        {row.yesNo ? "Yes" : "Allow"}
      </Choice>
      <Choice $on={!row.on} $dim={row.dim} aria-pressed={!row.on}>
        {row.yesNo ? "No" : "Restrict"}
      </Choice>
    </Choices>
  </Setting>
);

const AdminConsole = () => (
  <Console>
    <TopBar>
      <TopNav>
        {topLinks.map((t) => (
          <TopLink key={t} href="#" $active={t === "Device Mgmt"} $focused={t === "Home"}>
            <span>{t}</span>
          </TopLink>
        ))}
      </TopNav>
      <TopTools>
        <ToolButton aria-label="Search">
          <svg width="23" height="23" viewBox="0 0 23 23" fill="none" stroke="currentColor" strokeWidth="1.6" strokeLinecap="round">
            <circle cx="11" cy="11" r="9.2" />
            <path d="m17.500 17.500 4 4" />
          </svg>
        </ToolButton>
        <ToolButton aria-label="Video">
          <svg width="26" height="20" viewBox="0 0 26 20" fill="none" stroke="currentColor" strokeWidth="1.6" strokeLinejoin="round">
            <rect x="1" y="1.5" width="18" height="16.5" rx="3.5" />
            <path d="m19.500 9.500 5-5v11z" />
          </svg>
        </ToolButton>
        <ToolButton aria-label="What's new">
          <svg width="17" height="20" viewBox="0 0 17 20" fill="none" stroke="currentColor" strokeWidth="1.4" strokeLinejoin="round">
            <path d="M4 16V8c0-3.500 2-6 4.500-7.200C11 2 13 4.500 13 8v8zM4 11.500 1.200 14v4.500H4.500M13 11.500l2.800 2.500v4.500H12.500M5.500 18.500h6" />
            <circle cx="8.5" cy="8" r="2" />
          </svg>
        </ToolButton>
        <ToolButton aria-label="Quick actions">
          <svg width="15" height="20" viewBox="0 0 15 20" fill="none" stroke="currentColor" strokeWidth="1.3" strokeLinejoin="round">
            <path d="M6 1h6L9.500 7H14L3 19l3-8.500H1.500z" />
          </svg>
        </ToolButton>
      </TopTools>
    </TopBar>
    <Body>
      <SideNav aria-label="Profiles">
        <SideList>
          {Object.keys(sideIcons).map((t) => (
            <li key={t}>
              <SideLink href="#">
                {sideIcons[t]}
                {t}
              </SideLink>
            </li>
          ))}
        </SideList>
      </SideNav>
      <Workspace>
        <Columns>
          <SubNav aria-label="Restrictions">
            {subLinks.map((t) => (
              <SubLink key={t} href="#">
                {t}
              </SubLink>
            ))}
          </SubNav>
          <Settings>
            {rows.map((r) => (
              <SettingRow key={r.label} row={r} />
            ))}
          </Settings>
        </Columns>
        <Footer>
          <SaveButton>Save</SaveButton>
        </Footer>
        <Tail />
      </Workspace>
    </Body>
    <Fab aria-label="Menu">
      <i />
      <i />
      <i />
    </Fab>
  </Console>
);

const TabletSettings = () => (
  <TabletFrame>
    <Tablet>
      <Panel>
        <PanelRow href="#" $faded>
          {tiles.General}
          General
        </PanelRow>
        <SearchBox>
          <svg width="16" height="16" viewBox="0 0 16 16" fill="none" stroke="#0b0b0f" strokeWidth="1.7" strokeLinecap="round" aria-hidden>
            <circle cx="6.5" cy="6.5" r="5" />
            <path d="m10.300 10.300 4.200 4.200" />
          </svg>
          <input type="text" placeholder="Search" aria-label="Search" />
          <svg width="13" height="17" viewBox="0 0 13 17" fill="none" stroke="#3c3c41" strokeWidth="1.2" strokeLinecap="round" aria-hidden>
            <rect x="4" y="1" width="5" height="9.5" rx="2.5" />
            <path d="M1.500 7.500c0 7 10 7 10 0M6.500 13v3M3.500 16h6" />
          </svg>
        </SearchBox>
        <PanelGroups>
          {panelGroups.map((g) => (
            <PanelGroup key={g[0]} $rows={g.length}>
              {g.map((t) => (
                <PanelRow key={t} href="#" $selected={t === "Apps"}>
                  {tiles[t]}
                  {t}
                </PanelRow>
              ))}
            </PanelGroup>
          ))}
        </PanelGroups>
      </Panel>
      <Detail>
        <Scrolled>
          <ScrolledRow $blur={1} $strength={0.3}>
            <PhoneTile />
            <span>Incoming Calls</span>
          </ScrolledRow>
          <ScrolledRow $blur={0} $strength={0.8}>
            <AlertTile />
            <span>Announce Calls</span>
            <Faint>Never</Faint>
            <Chevron />
          </ScrolledRow>
        </Scrolled>
        <Card>
          <CardRow>
            <span>Share Name and Photo</span>
            <em>Off</em>
            <Chevron />
          </CardRow>
        </Card>
        <Note>{"To personalise your messages, choose your name and photo, and who\ncan see what you share."}</Note>
        <Card>
          <CardRow>
            <span>SharePlay</span>
            <Chevron />
          </CardRow>
        </Card>
        <Note>{"Watch shows, listen to music and use apps together during\nFaceTime calls."}</Note>
        <GroupTitle>Calls</GroupTitle>
        <Card>
          <CardRow $line>
            <span>Respond with Text</span>
            <Chevron />
          </CardRow>
          <CardRow>
            <span>Audio Call Recording</span>
            <em>On</em>
            <Chevron />
          </CardRow>
        </Card>
        <Spacer />
        <Card>
          <CardRow>
            <label htmlFor="haptics">Haptics</label>
            <Toggle type="checkbox" id="haptics" defaultChecked />
          </CardRow>
        </Card>
        <Note>Play haptics when a call is connected or dropped.</Note>
        <Card>
          <CardRow>
            <label htmlFor="hold">Hold Assist Detection</label>
            <Toggle type="checkbox" id="hold" defaultChecked />
          </CardRow>
        </Card>
        <Note>{"Automatically detect when you are placed on hold so you can step\naway. iPad will then notify you when it’s time to pick up."}</Note>
        <Card>
          <LongRow>
            <div>
              <label htmlFor="silence">Silence Unknown Callers</label>
              <p>
                {"Calls from unknown numbers will be silenced, sent to\nvoicemail and displayed on the Recents list.\n\nIncoming calls will continue to ring from people in\nyour contacts, recent outgoing calls and Siri\nSuggestions."}
              </p>
            </div>
            <Toggle type="checkbox" id="silence" />
          </LongRow>
        </Card>
        <GroupTitle>Call Filtering</GroupTitle>
        <Card>
          <LongRow>
            <div>
              <label htmlFor="unknown">Unknown Callers</label>
              <p>{"Missed calls and voicemail from unknown numbers\nwill be moved to the Unknown Callers list."}</p>
            </div>
            <Toggle type="checkbox" id="unknown" />
          </LongRow>
        </Card>
        <DetailHeader>
          <BackButton aria-label="Back">
            <svg width="12" height="18" viewBox="0 0 12 18" fill="none" stroke="currentColor" strokeWidth="2" strokeLinecap="round" strokeLinejoin="round">
              <path d="M9.500 2 2.500 9l7 7" />
            </svg>
          </BackButton>
          <h1>Phone</h1>
        </DetailHeader>
      </Detail>
      <Clock>
        <span>5:21PM</span>
        <span>Wed 18 Feb</span>
      </Clock>
      <Battery>
        <svg width="13" height="10" viewBox="0 0 13 10" fill="none" stroke="#0b0b0f" strokeWidth="1.9" aria-hidden>
          <path d="M.8 3.800c3.200-3 8.200-3 11.400 0M3.200 6.200c1.900-1.700 4.700-1.700 6.600 0" />
          <path d="m4.800 7.700 1.700 1.800 1.700-1.800c-1-.8-2.400-.8-3.400 0z" fill="#0b0b0f" stroke="none" />
        </svg>
        45%
        <svg width="24" height="12" viewBox="0 0 24 12" aria-hidden>
          <rect x=".5" y=".5" width="20" height="11" rx="3.5" fill="#fff" stroke="#a5a5aa" />
          <path d="M4 2h6v8H4a2 2 0 0 1-2-2V4a2 2 0 0 1 2-2z" fill="#3fcb60" />
          <path d="M12 .8 6.500 6.800h3.300L8.500 11.200 14.200 5.300h-3.300z" fill="#0b0b0f" />
          <path d="M22 4.200c1.300.6 1.300 3 0 3.600z" fill="#a5a5aa" />
        </svg>
      </Battery>
    </Tablet>
  </TabletFrame>
);

export default function App() {
  return (
    <>
      <GlobalStyle />
      <Page>
        <AdminConsole />
        <TabletSettings />
      </Page>
    </>
  );
}
